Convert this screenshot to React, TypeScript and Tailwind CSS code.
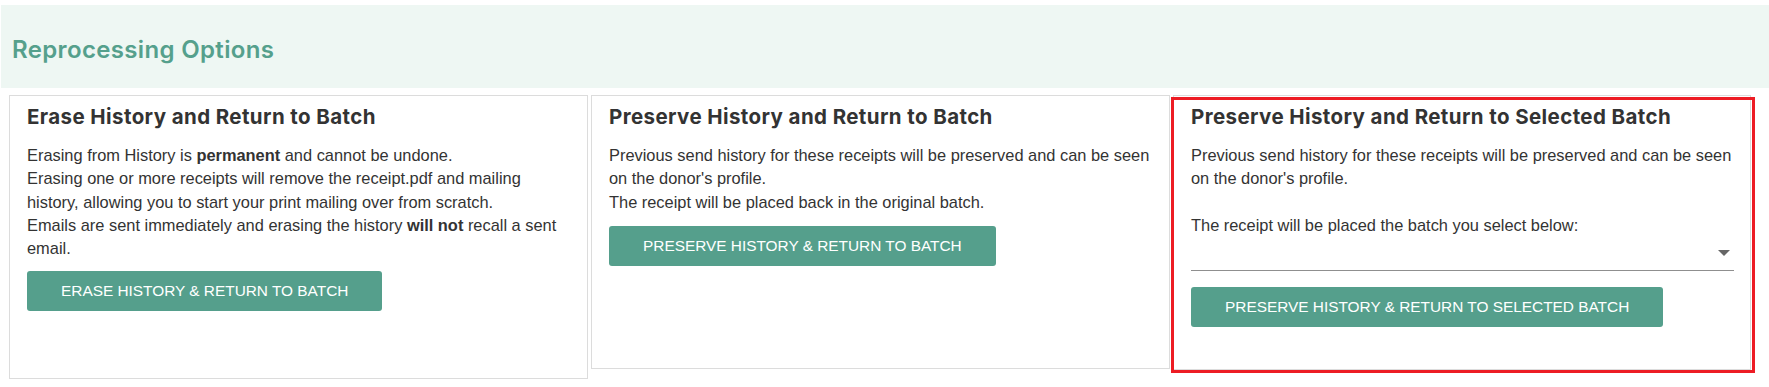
import React from 'react'

function Btn({ children }: { children: React.ReactNode }) {
  return (
    <button className="h-10 px-[34px] rounded-[3px] bg-[#559f8c] text-white text-[15.4px] uppercase font-['Liberation_Sans',Arial,sans-serif] leading-10 whitespace-nowrap">
      {children}
    </button>
  )
}

function Title({ children }: { children: React.ReactNode }) {
  return (
    <h3 className="font-['Inter',sans-serif] font-bold text-[20.5px] tracking-[0.4px] leading-7 text-[#333]">
      {children}
    </h3>
  )
}

export default function App() {
  return (
    <div className="w-[1769px] pt-[5px] bg-white text-[#333] font-['Liberation_Sans',Arial,sans-serif]">
      <div className="ml-px h-[83px] bg-[#eef7f3] pt-[29px] pl-[11px]">
        <h2 className="font-['Inter',sans-serif] font-semibold text-[24px] tracking-[0.35px] leading-8 text-[#55a08c]">
          Reprocessing Options
        </h2>
      </div>

      <div className="mt-[7px] ml-[9px] flex items-start gap-[3px]">
        {/* erase */}
        <div className="w-[579px] h-[284px] border border-[#dcdcdc] px-[17px] pt-[7px]">
          <Title>Erase History and Return to Batch</Title>
          <p className="mt-[13px] text-[16.4px] leading-[23.3px]">
            Erasing from History is <b>permanent</b> and cannot be undone.
            <br />
            Erasing one or more receipts will remove the receipt.pdf and mailing
            <br />
            history, allowing you to start your print mailing over from scratch.
            <br />
            Emails are sent immediately and erasing the history <b>will not</b> recall a sent email.
          </p>
          <div className="mt-[11px]">
            <Btn>Erase History &amp; Return to Batch</Btn>
          </div>
        </div>

        {/* preserve */}
        <div className="w-[579px] h-[274px] border border-[#dcdcdc] px-[17px] pt-[7px]">
          <Title>Preserve History and Return to Batch</Title>
          <p className="mt-[13px] text-[16.4px] leading-[23.3px]">
            Previous send history for these receipts will be preserved and can be seen on the donor's profile.
            <br />
            The receipt will be placed back in the original batch.
          </p>
          <div className="mt-3">
            <Btn>Preserve History &amp; Return to Batch</Btn>
          </div>
        </div>

        {/* preserve to selected */}
        <div className="relative w-[578px] h-[275px] border border-[#dcdcdc] px-[17px] pt-[7px]">
          <Title>Preserve History and Return to Selected Batch</Title>
          <p className="mt-[13px] text-[16.4px] leading-[23.3px]">
            Previous send history for these receipts will be preserved and can be seen on the donor's profile.
            <br />
            <br />
            The receipt will be placed the batch you select below:
          </p>
          <div className="relative h-[34px] mr-[-1px] border-b border-[#8f8f8f]">
            <span className="absolute right-[4px] top-[13px] w-0 h-0 border-l-[6px] border-r-[6px] border-t-[6px] border-l-transparent border-r-transparent border-t-[#666]" />
          </div>
          <div className="mt-4">
            <Btn>Preserve History &amp; Return to Selected Batch</Btn>
          </div>
          <div className="pointer-events-none absolute left-[-3px] top-[1px] w-[584px] h-[276px] border-[3px] border-[#ed1c24]" />
        </div>
      </div>
    </div>
  )
}
